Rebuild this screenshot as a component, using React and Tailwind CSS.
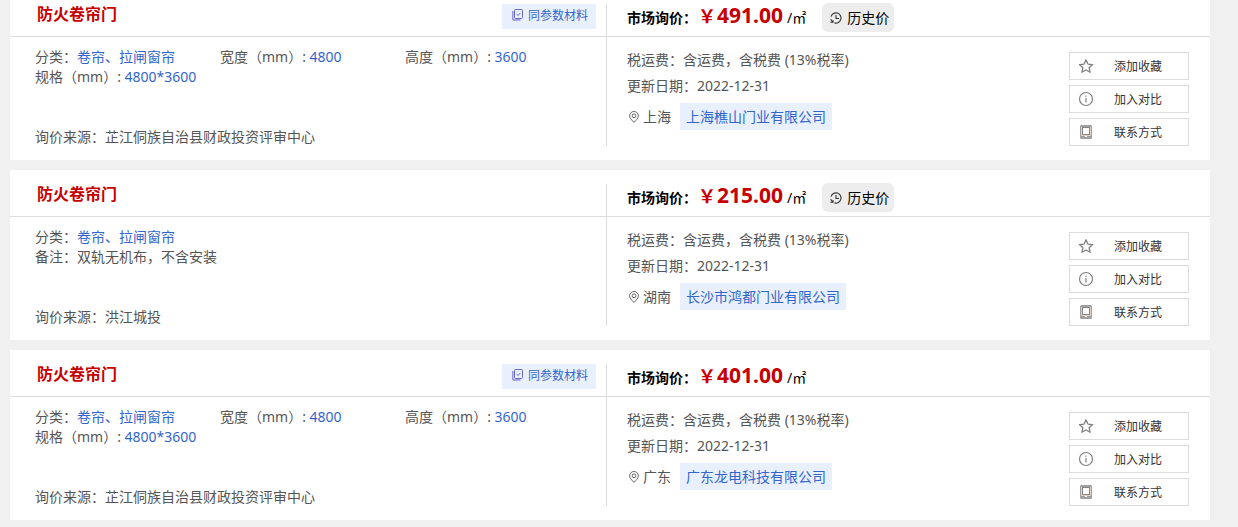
import React from "react";

const items = [
  {
    title: "防火卷帘门",
    similar: true,
    specs: [
      { label: "分类：", value: "卷帘、拉闸窗帘" },
      { label: "宽度（mm）: ", value: "4800" },
      { label: "高度（mm）: ", value: "3600" },
      { label: "规格（mm）: ", value: "4800*3600" },
    ],
    source: "芷江侗族自治县财政投资评审中心",
    price: "491.00",
    history: true,
    region: "上海",
    company: "上海樵山门业有限公司",
  },
  {
    title: "防火卷帘门",
    similar: false,
    specs: [{ label: "分类：", value: "卷帘、拉闸窗帘" }],
    note: "双轨无机布，不含安装",
    source: "洪江城投",
    price: "215.00",
    history: true,
    region: "湖南",
    company: "长沙市鸿都门业有限公司",
  },
  {
    title: "防火卷帘门",
    similar: true,
    specs: [
      { label: "分类：", value: "卷帘、拉闸窗帘" },
      { label: "宽度（mm）: ", value: "4800" },
      { label: "高度（mm）: ", value: "3600" },
      { label: "规格（mm）: ", value: "4800*3600" },
    ],
    source: "芷江侗族自治县财政投资评审中心",
    price: "401.00",
    history: false,
    region: "广东",
    company: "广东龙电科技有限公司",
  },
];

function CopyCheckIcon() {
  return (
    <svg className="size-3" viewBox="0 0 12 12" fill="none" stroke="#6468c0" strokeWidth="1">
      <rect x="2.5" y="0.5" width="8" height="9" rx="1" />
      <path d="M0.800 2v8a1 1 0 0 0 1 1H8.500" stroke="#8f8fd0" strokeWidth="1.400" />
      <path d="M4.700 5.200l1.400 1.300 2.300-2.600" />
    </svg>
  );
}

function HistoryIcon() {
  return (
    <svg className="size-3" viewBox="0 0 12 12" fill="none" stroke="#333" strokeWidth="1.100">
      <path d="M1 4.600A5.100 5.100 0 1 1 4.500 10.900" />
      <path d="M.8 7.200A5.100 5.100 0 0 0 2.800 10" />
      <path d="M.4 10.300h2.600V8" />
      <path d="M6 3v3.500h3" />
    </svg>
  );
}

function PinIcon() {
  return (
    <svg className="h-3 w-2.5" viewBox="0 0 10 12" fill="none" stroke="#666" strokeWidth="1">
      <path d="M5 11.400C2.600 9 .6 7 .6 4.800a4.400 4.300 0 0 1 8.800 0C9.400 7 7.400 9 5 11.400z" />
      <circle cx="5" cy="4.800" r="1.900" />
    </svg>
  );
}

function StarIcon() {
  return (
    <svg className="size-4" viewBox="0 0 16 16" fill="none" stroke="#808080" strokeWidth="1.300" strokeLinejoin="round">
      <path d="M8 1.800l1.900 4.300 4.700.5-3.500 3.100 1 4.600L8 12l-4.100 2.300 1-4.600L1.400 6.600l4.700-.5z" />
    </svg>
  );
}

function InfoIcon() {
  return (
    <svg className="size-4" viewBox="0 0 16 16" fill="none" stroke="#808080" strokeWidth="1.200">
      <circle cx="8" cy="8" r="6.500" />
      <path d="M8 7v4.500M8 4.400v1.300" />
    </svg>
  );
}

function PhoneIcon() {
  return (
    <svg className="size-4" viewBox="0 0 16 16" fill="none">
      <rect x="2" y="1" width="12" height="14" rx="1.500" fill="#a0a0a0" />
      <rect x="3" y="3" width="10" height="9" fill="#e2d2c4" />
      <rect x="4.500" y="3.500" width="7" height="7" fill="#fff" stroke="#858585" />
      <path d="M7 12.500h2" stroke="#fff" />
    </svg>
  );
}

function ActionButton({ icon, children }) {
  return (
    <button
      type="button"
      className="flex h-7 w-[120px] items-center border border-[#dcdcdc] bg-white pl-2 text-xs text-[#333]"
    >
      {icon}
      <span className="pt-0.5 pl-5">{children}</span>
    </button>
  );
}

function Card({ item }) {
  return (
    <article className="bg-white pb-3.5">
      <header className="flex border-b border-[#dcdcdc] pt-3.5">
        <div className="flex h-8 w-[597px] shrink-0 items-start justify-between border-r border-[#dcdcdc] pr-2.5 pl-[27px]">
          <h2 className="text-base leading-5 font-bold text-[#c70000]">{item.title}</h2>
          {item.similar && (
            <a href="#" className="flex h-[25px] items-center gap-1 bg-[#e8f0fe] pr-2 pb-0.5 pl-[10px] text-xs text-[#3366cc]">
              <span className="pb-0.5">
                <CopyCheckIcon />
              </span>
              同参数材料
            </a>
          )}
        </div>
        <div className="flex h-8 items-start pl-5">
          <span className="pt-1 text-sm leading-5 font-bold text-black">市场询价：</span>
          <span className="flex items-baseline text-[21px] leading-[22px] font-bold text-[#c70000]">
            <span className="px-px text-lg leading-[22px]">￥</span>
            {item.price}
          </span>
          <span className="pt-1 pl-1 text-sm leading-5 text-black">/㎡</span>
          {item.history && (
            <button
              type="button"
              className="-mt-px ml-4 flex h-[29px] items-center gap-[5px] rounded-md bg-[#ededed] pr-[5px] pl-2 text-sm text-black"
            >
              <HistoryIcon />
              历史价
            </button>
          )}
        </div>
      </header>

      <div className="flex text-sm leading-5 text-[#555]">
        <div className="flex w-[597px] shrink-0 flex-col justify-between border-r border-[#dcdcdc] pt-2.5 pl-[25px]">
          <div className="grid grid-cols-3 pr-4">
            {item.specs.map((spec) => (
              <p key={spec.label} className="whitespace-pre">
                {spec.label}
                <span className="text-[#3366cc]">{spec.value}</span>
              </p>
            ))}
            {item.note && <p className="col-span-3">备注：{item.note}</p>}
          </div>
          <p className="leading-[18px]">询价来源：{item.source}</p>
        </div>

        <div className="flex grow justify-between pr-[21px] pl-5">
          <div className="pt-[13px]">
            <p>税运费：含运费，含税费 (13%税率)</p>
            <p className="pt-1.5">更新日期：2022-12-31</p>
            <div className="flex items-center gap-[9px] pt-[7px]">
              <span className="flex items-center gap-1 pl-0.5">
                <PinIcon />
                {item.region}
              </span>
              <a href="#" className="bg-[#e8f0fe] px-1.5 leading-[27px] text-[#3366cc]">
                {item.company}
              </a>
            </div>
          </div>
          <div className="flex flex-col gap-[5px] pt-[15px]">
            <ActionButton icon={<StarIcon />}>添加收藏</ActionButton>
            <ActionButton icon={<InfoIcon />}>加入对比</ActionButton>
            <ActionButton icon={<PhoneIcon />}>联系方式</ActionButton>
          </div>
        </div>
      </div>
    </article>
  );
}

export default function App() {
  return (
    <div className="min-h-screen overflow-hidden bg-[#f0f0f0] pr-7 pl-2.5 font-['Noto_Sans','Noto_Sans_CJK_SC',sans-serif]">
      <main className="-mt-2.5 flex flex-col gap-2.5">
        {items.map((item) => (
          <Card key={item.company} item={item} />
        ))}
      </main>
    </div>
  );
}
